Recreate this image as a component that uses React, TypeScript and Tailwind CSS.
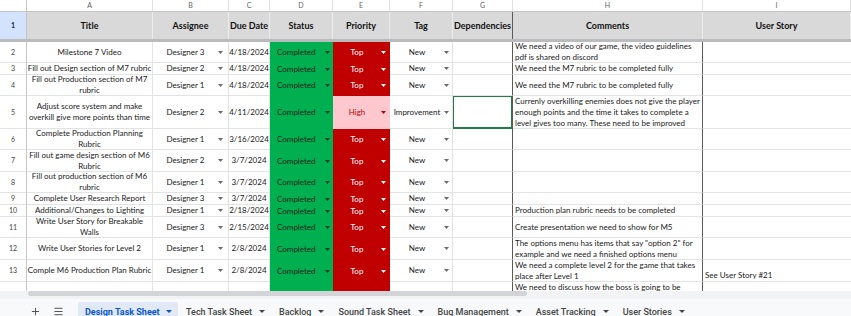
import { Plus, Menu } from "lucide-react"

const COLS = "grid grid-cols-[27px_126px_76px_41px_63px_57px_63px_60px_190px_148px]"

type Row = {
  n: number
  h: string
  title?: string[]
  who?: string
  date?: string
  pri?: "Top" | "High"
  tag?: string
  comment?: string[]
  story?: string
  top?: boolean
}

const rows: Row[] = [
  { n: 2, h: "h-[21px]", title: ["Milestone 7 Video"], who: "Designer 3", date: "4/18/2024", pri: "Top", tag: "New", comment: ["We need a video of our game, the video guidelines", "pdf is shared on discord"] },
  { n: 3, h: "h-[12px]", title: ["Fill out Design section of M7 rubric"], who: "Designer 2", date: "4/18/2024", pri: "Top", tag: "New", comment: ["We need the M7 rubric to be completed fully"] },
  { n: 4, h: "h-[21px]", title: ["Fill out Production section of M7", "rubric"], who: "Designer 1", date: "4/18/2024", pri: "Top", tag: "New", comment: ["We need the M7 rubric to be completed fully"] },
  { n: 5, h: "h-[33px]", title: ["Adjust score system and make", "overkill give more points than time"], who: "Designer 2", date: "4/11/2024", pri: "High", tag: "Improvement", comment: ["Currenly overkilling enemies does not give the player", "enough points and the time it takes to complete a", "level gives too many. These need to be improved"] },
  { n: 6, h: "h-[21px]", title: ["Complete Production Planning", "Rubric"], who: "Designer 1", date: "3/16/2024", pri: "Top", tag: "New" },
  { n: 7, h: "h-[22px]", title: ["Fill out game design section of M6", "Rubric"], who: "Designer 2", date: "3/7/2024", pri: "Top", tag: "New" },
  { n: 8, h: "h-[21px]", title: ["Fill out production section of M6", "rubric"], who: "Designer 1", date: "3/7/2024", pri: "Top", tag: "New" },
  { n: 9, h: "h-[12px]", title: ["Complete User Research Report"], who: "Designer 3", date: "3/7/2024", pri: "Top", tag: "New" },
  { n: 10, h: "h-[12px]", title: ["Additional/Changes to Lighting"], who: "Designer 1", date: "2/18/2024", pri: "Top", tag: "New", comment: ["Production plan rubric needs to be completed"] },
  { n: 11, h: "h-[21px]", title: ["Write User Story for Breakable", "Walls"], who: "Designer 3", date: "2/15/2024", pri: "Top", tag: "New", comment: ["Create presentation we need to show for M5"] },
  { n: 12, h: "h-[22px]", title: ["Write User Stories for Level 2"], who: "Designer 1", date: "2/8/2024", pri: "Top", tag: "New", comment: ["The options menu has items that say \"option 2\" for", "example and we need a finished options menu"] },
  { n: 13, h: "h-[22px]", title: ["Comple M6 Production Plan Rubric"], who: "Designer 1", date: "2/8/2024", pri: "Top", tag: "New", comment: ["We need a complete level 2 for the game that takes", "place after Level 1"], story: "See User Story #21" },
  // last row is cut by the scrollbar, only its first comment line shows
  { n: 14, h: "h-[12px]", comment: ["We need to discuss how the boss is going to be"], top: true },
]

const letters = ["A", "B", "C", "D", "E", "F", "G", "H", "I"]
const headers = ["Title", "Assignee", "Due Date", "Status", "Priority", "Tag", "Dependencies", "Comments", "User Story"]

const tabs = ["Tech Task Sheet", "Backlog", "Sound Task Sheet", "Bug Management", "Asset Tracking", "User Stories"]

function Caret({ color, w = 5 }: { color: string; w?: number }) {
  return (
    <svg width={w} height={3} viewBox={`0 0 ${w} 3`} className="shrink-0">
      <path d={`M0 0h${w}L${w / 2} 3z`} fill={color} />
    </svg>
  )
}

function Lines({ lines }: { lines: string[] }) {
  return (
    <div>
      {lines.map((l, i) => (
        <div key={i} className="whitespace-nowrap">{l}</div>
      ))}
    </div>
  )
}

export default function App() {
  return (
    <div className="w-[851px] h-[316px] overflow-hidden bg-white flex flex-col [font-family:Lato,sans-serif] text-[#1a1a1a]">
      <div className="h-[291px] overflow-hidden shrink-0">
        {/* column letters */}
        <div className={`${COLS} h-[12px] border-b border-[#c4c7c5] text-[7px] text-[#5f6368]`}>
          <div className="border-r border-[#c4c7c5]" />
          {letters.map((l) => (
            <div key={l} className="flex items-center justify-center border-r border-[#e1e1e1]">{l}</div>
          ))}
        </div>

        {/* header row */}
        <div className={`${COLS} h-[27px]`}>
          <div className="flex items-center justify-center bg-[#d3e3fd] border-r border-[#c4c7c5] text-[7px] font-bold text-[#0b2a5c]">1</div>
          {headers.map((h, i) => (
            <div
              key={h}
              className={`flex items-center justify-center bg-[#d9d9d9] text-[9px] font-bold text-[#111] border-r ${i === 6 ? "border-[#5a5a5a]" : "border-[#ececec]"}`}
            >
              {h}
            </div>
          ))}
        </div>
        <div className="h-[3px] bg-[#b9bbbd]" />

        {rows.map((r) => (
          <div key={r.n} className={`${COLS} ${r.h} text-[8px] leading-[11px]`}>
            <div className="flex items-center justify-center border-r border-b border-[#c4c7c5] border-b-[#e2e3e3] text-[7px] text-[#444]">
              {r.title ? r.n : ""}
            </div>
            <div className="flex items-center justify-center text-center border-r border-b border-[#e2e3e3] overflow-hidden">
              {r.title && <Lines lines={r.title} />}
            </div>
            <div className="flex items-center pr-[5px] border-r border-b border-[#e2e3e3]">
              {r.who && (
                <>
                  <span className="flex-1 text-center">{r.who}</span>
                  <Caret color="#6b6b6b" />
                </>
              )}
            </div>
            <div className="flex items-center justify-center border-r border-b border-[#e2e3e3] whitespace-nowrap">{r.date}</div>
            <div className="flex items-center justify-between pl-[7px] pr-[3px] bg-[#00b050] text-[#0f2418]">
              {r.who && (
                <>
                  <span>Completed</span>
                  <Caret color="#1b3a26" />
                </>
              )}
            </div>
            <div className={`flex items-center pr-[4px] ${r.pri === "High" ? "bg-[#ffc7ce] text-[#c00000]" : "bg-[#c00000] text-white"}`}>
              {r.pri && (
                <>
                  <span className="flex-1 text-center">{r.pri}</span>
                  <Caret color={r.pri === "High" ? "#c00000" : "#ffffff"} />
                </>
              )}
            </div>
            <div className="flex items-center pr-[3px] border-r border-b border-[#e2e3e3]">
              {r.tag && (
                <>
                  <span className="flex-1 text-center whitespace-nowrap">{r.tag}</span>
                  <Caret color="#6b6b6b" />
                </>
              )}
            </div>
            <div
              className={`border-r border-b border-r-[#5a5a5a] ${r.n === 5 ? "border-b-[#237b45] ring-1 ring-inset ring-[#237b45]" : "border-b-[#e2e3e3]"}`}
            />
            <div className={`flex ${r.top ? "items-start" : "items-center"} pl-[2px] border-r border-b border-r-[#5a5a5a] border-b-[#e2e3e3] overflow-hidden`}>
              {r.comment && <Lines lines={r.comment} />}
            </div>
            <div className="flex items-end pl-[2px] border-b border-[#e2e3e3] whitespace-nowrap">{r.story}</div>
          </div>
        ))}
      </div>

      {/* horizontal scrollbar */}
      <div className="h-[8px] shrink-0 bg-[#f1f3f4] flex items-start">
        <div className="ml-[28px] w-[499px] h-[5px] rounded-full bg-[#d2d4d7]" />
      </div>

      {/* sheet tabs */}
      <div className="flex-1 bg-[#f8f9fa] flex items-start pt-[3px] [font-family:Roboto,sans-serif] text-[9px] font-medium text-[#444746]">
        <div className="w-[78px] flex items-center pt-[4px]">
          <Plus className="ml-[30px] w-[11px] h-[11px] text-[#444746]" strokeWidth={2} />
          <Menu className="ml-[12px] w-[11px] h-[11px] text-[#444746]" strokeWidth={2} />
        </div>
        <div className="w-[100px] h-[30px] bg-[#e1e9f7] rounded-t-[3px] flex items-start pt-[4px] pl-[7px] gap-[6px] text-[#0b57d0] font-bold">
          <span className="whitespace-nowrap">Design Task Sheet</span>
          <span className="pt-[4px]"><Caret color="#0b57d0" w={6} /></span>
        </div>
        {tabs.map((t) => (
          <div key={t} className="flex items-start pt-[4px] pl-[8px] pr-[6px] gap-[7px]">
            <span className="whitespace-nowrap">{t}</span>
            <span className="pt-[4px]"><Caret color="#444746" w={6} /></span>
          </div>
        ))}
      </div>
    </div>
  )
}
